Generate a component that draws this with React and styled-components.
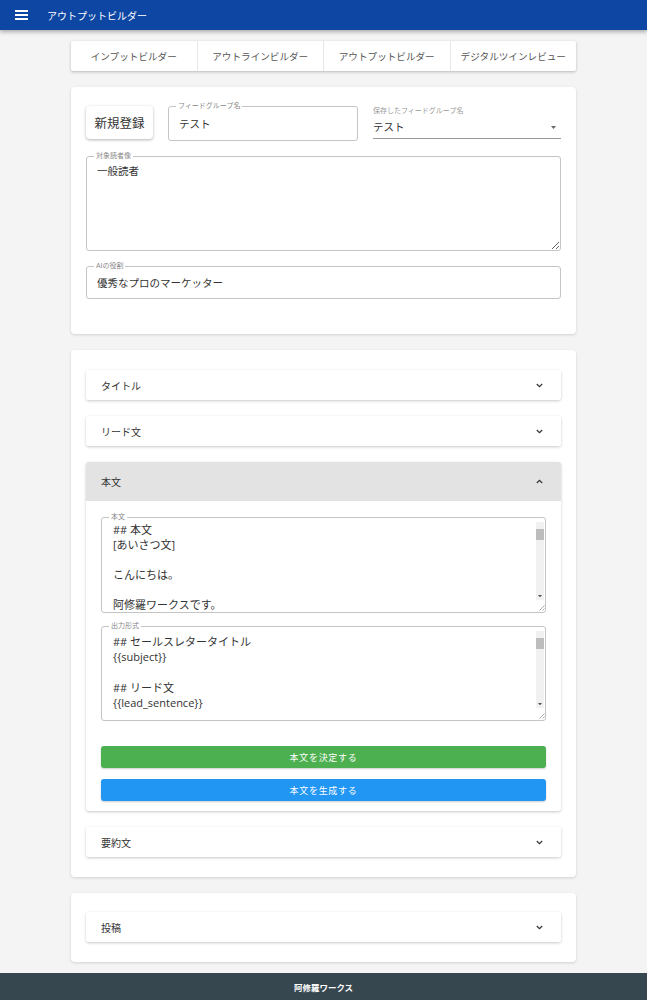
import React from "react";
import styled, { createGlobalStyle } from "styled-components";

const GlobalStyle = createGlobalStyle`
  body {
    margin: 0;
    background: #f4f4f4;
    font-family: Roboto, "Noto Sans CJK JP", sans-serif;
    color: #333;
  }
`;

const AppBar = styled.header`
  height: 30px;
  background: #0e47a3;
  display: flex;
  align-items: center;
  padding-left: 15px;
  gap: 19px;
  color: #fff;
  font-size: 10px;
  box-shadow: 0 2px 4px rgba(0, 0, 0, 0.3);
`;

const Main = styled.main`
  width: 505px;
  margin: 11px auto 0;
  display: flex;
  flex-direction: column;
  gap: 16px;
  padding-bottom: 11px;
`;

const Tabs = styled.nav`
  display: flex;
  height: 30px;
  background: #fff;
  border-radius: 2px;
  box-shadow: 0 1px 3px rgba(0, 0, 0, 0.25);
`;

const Tab = styled.button`
  flex: 1;
  border: none;
  border-right: 1px solid #e6e6e6;
  background: transparent;
  font-family: inherit;
  font-size: 9.6px;
  color: #555;
  padding: 0;
  &:last-child {
    border-right: none;
  }
`;

const Card = styled.section`
  background: #fff;
  border-radius: 4px;
  box-shadow: 0 1px 3px rgba(0, 0, 0, 0.15);
  padding: ${(p) => p.$pad};
  display: flex;
  flex-direction: column;
  gap: ${(p) => p.$gap};
`;

const Row = styled.div`
  display: flex;
  gap: 15px;
  align-items: flex-start;
`;

const PlainButton = styled.button`
  width: 67px;
  height: 33px;
  border: none;
  border-radius: 4px;
  background: #fff;
  font-family: inherit;
  font-size: 12.5px;
  color: #333;
  padding: 0;
  box-shadow: 0 1px 3px rgba(0, 0, 0, 0.3);
  flex-shrink: 0;
`;

const Field = styled.fieldset`
  margin: ${(p) => p.$m || "0"};
  padding: 0;
  border: 1px solid #c4c4c4;
  border-radius: 3px;
  min-width: 0;
  flex: ${(p) => (p.$grow ? 1 : "none")};
  display: flex;
`;

const Legend = styled.legend`
  font-size: 7px;
  height: 8px;
  line-height: 8px;
  color: #888;
  padding: 0 2px;
  margin-left: 7px;
`;

const Input = styled.input`
  flex: 1;
  min-width: 0;
  border: none;
  outline: none;
  background: transparent;
  font-family: inherit;
  font-size: 10.5px;
  color: #333;
  height: ${(p) => p.$h};
  padding: 0 10px 4px;
  box-sizing: border-box;
`;

const TextArea = styled.textarea`
  flex: 1;
  min-width: 0;
  border: none;
  outline: none;
  background: transparent;
  font-family: ${(p) =>
    p.$scroll ? '"Open Sans", "Noto Sans CJK JP", sans-serif' : "inherit"};
  font-size: ${(p) => p.$fs || "10.5px"};
  line-height: ${(p) => p.$lh || "1.4"};
  color: #333;
  height: ${(p) => p.$h};
  padding: ${(p) => p.$pad};
  box-sizing: border-box;
  resize: ${(p) => (p.$scroll ? "none" : "vertical")};
  overflow: hidden;
`;

const ScrollCol = styled.div`
  width: 8px;
  margin: 1px 1px 1px 0;
  background: #f1f1f1;
  display: flex;
  flex-direction: column;
  align-items: center;
`;

const Thumb = styled.div`
  width: 8px;
  height: 11px;
  margin-top: 7px;
  background: #bdbdbd;
`;

const Spacer = styled.div`
  flex: 1;
`;

const Grip = styled.div`
  width: 9px;
  height: 11px;
  margin-top: 3px;
  background: #fff;
  display: flex;
  align-items: flex-end;
  justify-content: flex-end;
`;

const Select = styled.div`
  flex: 1;
  display: flex;
  flex-direction: column;
  padding-top: 1px;
`;

const SelectLabel = styled.span`
  font-size: 7px;
  line-height: 8px;
  color: #999;
  margin-bottom: 5px;
`;

const SelectValue = styled.div`
  display: flex;
  align-items: center;
  justify-content: space-between;
  font-size: 10.5px;
  line-height: 15px;
  color: #333;
  padding: 0 5px 3px 0;
  border-bottom: 1px solid #9a9a9a;
`;

const Panel = styled.div`
  background: #fff;
  border-radius: 3px;
  box-shadow: 0 1px 3px rgba(0, 0, 0, 0.22);
  overflow: hidden;
`;

const PanelHead = styled.div`
  height: ${(p) => (p.$open ? "39px" : "30px")};
  background: ${(p) => (p.$open ? "#e3e3e3" : "#fff")};
  display: flex;
  align-items: center;
  justify-content: space-between;
  padding: 0 18px 0 15px;
  font-size: 10px;
  color: #333;
`;

const PanelBody = styled.div`
  padding: 12px 15px 10px;
  display: flex;
  flex-direction: column;
`;

const ActionButton = styled.button`
  height: 22px;
  border: none;
  border-radius: 3px;
  background: ${(p) => p.$bg};
  color: #fff;
  font-family: inherit;
  font-size: 9px;
  letter-spacing: 0.7px;
  box-shadow: 0 1px 2px rgba(0, 0, 0, 0.2);
  margin-top: ${(p) => p.$mt};
`;

const Footer = styled.footer`
  height: 27px;
  background: #37474f;
  color: #fff;
  font-size: 8.5px;
  font-weight: bold;
  display: flex;
  align-items: center;
  justify-content: center;
`;

const MenuIcon = () => (
  <svg width="13" height="10" viewBox="0 0 13 10">
    <path d="M0 1h13M0 5h13M0 9h13" stroke="#fff" strokeWidth="1.8" />
  </svg>
);

const Chevron = ({ up }) => (
  <svg width="7" height="5" viewBox="0 0 7 5">
    <path
      d={up ? "M0.8 4l2.7-2.7 2.7 2.7" : "M0.8 1l2.7 2.7 2.7-2.7"}
      fill="none"
      stroke="#333"
      strokeWidth="1.2"
    />
  </svg>
);

const CaretDown = ({ size = 5, color = "#666" }) => (
  <svg width={size} height={size * 0.6} viewBox="0 0 5 3">
    <path d="M0 0h5L2.5 3z" fill={color} />
  </svg>
);

const GripLines = () => (
  <svg width="7" height="7" viewBox="0 0 7 7">
    <path d="M6.5 1.5L1.5 6.5M6.5 4.5L4.5 6.5" stroke="#999" strokeWidth="0.8" />
  </svg>
);

const ScrollBar = () => (
  <ScrollCol>
    <Thumb />
    <Spacer />
    <CaretDown size={4} color="#555" />
    <Grip>
      <GripLines />
    </Grip>
  </ScrollCol>
);

const honbun = [
  "## 本文",
  "[あいさつ文]",
  "",
  "こんにちは。",
  "",
  "阿修羅ワークスです。",
  "",
  "いつもご愛顧いただき、誠にありがとうございます。",
].join("\n");

const format = [
  "## セールスレタータイトル",
  "{{subject}}",
  "",
  "## リード文",
  "{{lead_sentence}}",
  "",
  "## 本文",
  "{{body}}",
].join("\n");

const Closed = ({ title }) => (
  <Panel>
    <PanelHead>
      {title}
      <Chevron />
    </PanelHead>
  </Panel>
);

export default function App() {
  return (
    <>
      <GlobalStyle />
      <AppBar>
        <MenuIcon />
        アウトプットビルダー
      </AppBar>
      <Main>
        <Tabs>
          <Tab>インプットビルダー</Tab>
          <Tab>アウトラインビルダー</Tab>
          <Tab>アウトプットビルダー</Tab>
          <Tab>デジタルツインレビュー</Tab>
        </Tabs>

        <Card $pad="19px 15px 35px" $gap="11px">
          <Row>
            <PlainButton>新規登録</PlainButton>
            <Field $grow $m="-4px 0 0">
              <Legend>フィードグループ名</Legend>
              <Input $h="30px" defaultValue="テスト" />
            </Field>
            <Select>
              <SelectLabel>保存したフィードグループ名</SelectLabel>
              <SelectValue>
                テスト
                <CaretDown />
              </SelectValue>
            </Select>
          </Row>
          <Field>
            <Legend>対象読者像</Legend>
            <TextArea $h="90px" $pad="5px 10px" defaultValue="一般読者" />
          </Field>
          <Field>
            <Legend>AIの役割</Legend>
            <Input $h="28px" defaultValue="優秀なプロのマーケッター" />
          </Field>
        </Card>

        <Card $pad="20px 15px" $gap="16px">
          <Closed title="タイトル" />
          <Closed title="リード文" />
          <Panel>
            <PanelHead $open>
              本文
              <Chevron up />
            </PanelHead>
            <PanelBody>
              <Field>
                <Legend>本文</Legend>
                <TextArea
                  $scroll
                  $h="91px"
                  $pad="1px 0 0 11px"
                  $fs="11px"
                  $lh="15px"
                  defaultValue={honbun}
                />
                <ScrollBar />
              </Field>
              <Field $m="9px 0 0">
                <Legend>出力形式</Legend>
                <TextArea
                  $scroll
                  $h="90px"
                  $pad="4px 0 0 11px"
                  $fs="11px"
                  $lh="15.3px"
                  defaultValue={format}
                />
                <ScrollBar />
              </Field>
              <ActionButton $bg="#4caf50" $mt="25px">
                本文を決定する
              </ActionButton>
              <ActionButton $bg="#2196f3" $mt="11px">
                本文を生成する
              </ActionButton>
            </PanelBody>
          </Panel>
          <Closed title="要約文" />
        </Card>

        <Card $pad="19px 15px 20px" $gap="16px">
          <Closed title="投稿" />
        </Card>
      </Main>
      <Footer>阿修羅ワークス</Footer>
    </>
  );
}
